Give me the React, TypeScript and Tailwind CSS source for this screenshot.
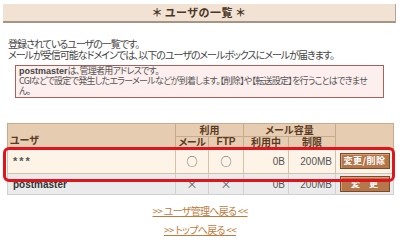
import React from "react";

const jp = { fontFamily: '"Noto Sans CJK JP", "Liberation Sans", sans-serif', fontFeatureSettings: '"palt"' } as React.CSSProperties;
const lat = { fontFamily: '"Liberation Sans", sans-serif' } as React.CSSProperties;

export default function App() {
  return (
    <div className="relative w-[400px] h-[246px] bg-white overflow-hidden text-[#333]" style={jp}>
      <div className="pt-[4px] pl-[3px] pr-[4px]">
        <div className="h-[19px] bg-[#f2e2d4] border-b-2 border-b-[#a89484] border-r border-r-[#b8a494] flex items-center justify-center text-[11px] font-bold text-[#4a3828] leading-none tracking-[0.5px]">
          ＊ ユーザの一覧 ＊
        </div>
      </div>
      <div className="pl-[8px] mt-[15px] text-[10px] leading-[11px] text-[#444] tracking-[-1px]">
        <div>登録されているユーザの一覧です。</div>
        <div>メールが受信可能なドメインでは、以下のユーザのメールボックスにメールが届きます。</div>
      </div>
      <div className="ml-[15px] w-[369px] mt-[5px] border border-[#a8605a] bg-[#fcefee] pl-[3px] pb-[1px] text-[9px] leading-[10px] text-[#555] tracking-[-0.75px] whitespace-nowrap">
        <div><span className="font-bold text-[#444] tracking-[0px]" style={lat}>postmaster</span>は、管理者用アドレスです。</div>
        <div>CGIなどで設定で発生したエラーメールなどが到着します。【削除】や【転送設定】を行うことはできませ</div>
        <div>ん。</div>
      </div>
      <div className="ml-[7px] mt-[25px] w-[386px]">
        <table className="w-full border-collapse text-[10px] border border-[#c8aa8c] table-fixed">
          <colgroup>
            <col className="w-[168px]" />
            <col className="w-[33px]" />
            <col className="w-[35px]" />
            <col className="w-[45px]" />
            <col className="w-[47px]" />
            <col className="w-[58px]" />
          </colgroup>
          <thead>
            <tr className="h-[13px] bg-[#e6cdb2] text-[#5a3a22]">
              <th rowSpan={2} className="border border-[#c8aa8c] text-left pl-[2px] pt-[8px] p-0 align-middle font-bold leading-[10px]">ユーザ</th>
              <th colSpan={2} className="border border-[#c8aa8c] p-0 font-bold leading-[10px]">利用</th>
              <th colSpan={2} className="border border-[#c8aa8c] p-0 font-bold leading-[10px]">メール容量</th>
              <th rowSpan={2} className="border border-[#c8aa8c] p-0"></th>
            </tr>
            <tr className="h-[12px] bg-[#e6cdb2] text-[#5a3a22]">
              <th className="border border-[#c8aa8c] p-0 font-bold leading-[10px] tracking-[-0.5px]">メール</th>
              <th className="border border-[#c8aa8c] p-0 font-bold leading-[10px]" style={lat}>FTP</th>
              <th className="border border-[#c8aa8c] p-0 font-bold leading-[10px]">利用中</th>
              <th className="border border-[#c8aa8c] p-0 font-bold leading-[10px]">制限</th>
            </tr>
          </thead>
          <tbody>
            <tr className="h-[25px] bg-[#fdf3e7] text-[#555] border-t-2 border-t-[#b89a7c]">
              <td className="border border-[#d8c0a8] pl-[5px] p-0 font-bold tracking-[2px] text-[11px]" style={lat}>***</td>
              <td className="border border-[#d8c0a8] p-0 text-center text-[11px] leading-none">○</td>
              <td className="border border-[#d8c0a8] p-0 text-center text-[11px] leading-none">○</td>
              <td className="border border-[#d8c0a8] p-0 text-right pr-[3px]" style={lat}>0B</td>
              <td className="border border-[#d8c0a8] p-0 text-right pr-[3px]" style={lat}>200MB</td>
              <td className="border border-[#d8c0a8] p-0 text-center leading-none">
                <span className="inline-block w-[50px] h-[16px] leading-[14px] bg-[#b5764a] border border-[#7c4a28] text-white text-[9px] font-bold text-center shadow-[inset_1px_1px_0_#d8a078] tracking-[0.5px]">変更/削除</span>
              </td>
            </tr>
            <tr className="h-[21px] bg-[#ebebeb] text-[#555]">
              <td className="border border-[#d0d0d0] pl-[5px] p-0 font-bold text-[#333] text-[10px]" style={lat}>postmaster</td>
              <td className="border border-[#d0d0d0] p-0 text-center text-[11px] leading-none">×</td>
              <td className="border border-[#d0d0d0] p-0 text-center text-[11px] leading-none">×</td>
              <td className="border border-[#d0d0d0] p-0 text-right pr-[3px]" style={lat}>0B</td>
              <td className="border border-[#d0d0d0] p-0 text-right pr-[3px]" style={lat}>200MB</td>
              <td className="border border-[#d0d0d0] p-0 text-center leading-none">
                <span className="inline-block w-[50px] h-[16px] leading-[14px] bg-[#b5764a] border border-[#7c4a28] text-white text-[9px] font-bold text-center shadow-[inset_1px_1px_0_#d8a078]">変　更</span>
              </td>
            </tr>
          </tbody>
        </table>
      </div>
      <div className="flex flex-col items-center mt-[10px] gap-[7px] text-[10px] leading-[12px] text-[#c07a3c] tracking-[-0.7px]">
        <a className="underline">&gt;&gt; ユーザ管理へ戻る &lt;&lt;</a>
        <a className="underline">&gt;&gt; トップへ戻る &lt;&lt;</a>
      </div>
      <div className="absolute left-[3px] top-[147px] w-[392px] h-[35px] border-[3px] border-[#e0141c] rounded-[6px]"></div>
    </div>
  );
}
